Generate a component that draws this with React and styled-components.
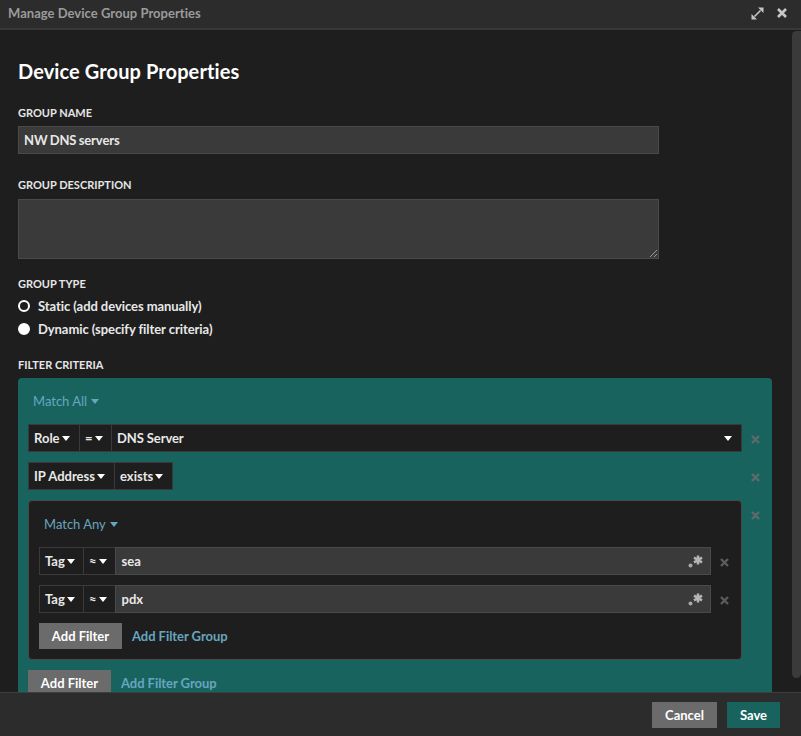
import styled, { createGlobalStyle } from 'styled-components';

const GlobalStyle = createGlobalStyle`
  html, body { margin: 0; padding: 0; height: 100%; background: #1e1e1e; }
  * { box-sizing: border-box; }
  body { font-family: Lato, "Open Sans", sans-serif; color: #fff; overflow: hidden; }
`;

const Modal = styled.div`
  width: 801px;
  height: 736px;
  display: flex;
  flex-direction: column;
`;

const Header = styled.div`
  height: 30px;
  flex: none;
  display: flex;
  align-items: center;
  justify-content: space-between;
  padding: 0 14px 2px 8px;
  background: #2c2c2c;
  border-bottom: 2px solid #383838;
`;

const HeaderTitle = styled.span`
  font-size: 13px;
  font-weight: 700;
  letter-spacing: 0.03px;
  color: #9b9b9b;
`;

const HeaderIcons = styled.div`
  display: flex;
  align-items: center;
  gap: 13px;
`;

const Body = styled.div`
  flex: 1;
  min-height: 0;
  position: relative;
  overflow: hidden;
  padding: 29px 29px 0 18px;
`;

const ScrollThumb = styled.div`
  position: absolute;
  top: 1px;
  right: 0;
  width: 9px;
  height: 647px;
  border-radius: 5px 0 5px 5px;
  background: #3a3a3a;
`;

const Title = styled.h1`
  margin: 0 0 23px;
  font-size: 20px;
  line-height: 24px;
  font-weight: 700;
  letter-spacing: 0.1px;
  color: #fff;
`;

const Label = styled.div`
  font-size: 11px;
  line-height: 14px;
  font-weight: 700;
  color: #e6e6e6;
  margin-bottom: ${(p) => p.$gap || 6}px;
`;

const Field = styled.div`
  width: 641px;
  height: ${(p) => p.$height || 28}px;
  margin-bottom: ${(p) => p.$gap || 24}px;
  padding: 0 5px;
  display: flex;
  align-items: center;
  position: relative;
  font-size: 13px;
  font-weight: 700;
  letter-spacing: -0.1px;
  word-spacing: -0.8px;
  color: #e8e8e8;
  background: #3a3a3a;
  border: 1px solid #4a4a4a;
`;

const Grip = styled.svg`
  position: absolute;
  right: 0;
  bottom: 0;
`;

const RadioRow = styled.div`
  height: 23px;
  display: flex;
  align-items: center;
  gap: 8px;
  font-size: 13px;
  font-weight: 700;
  letter-spacing: -0.06px;
  color: #e8e8e8;
`;

const Radio = styled.span`
  width: 12px;
  height: 12px;
  border-radius: 50%;
  border: 2px solid #fff;
  background: ${(p) => (p.$on ? '#fff' : 'transparent')};
`;

const RadioGroup = styled.div`
  margin: -3px 0 18px;
`;

const FilterPanel = styled.div`
  width: 754px;
  height: 340px;
  padding: 13px 10px 0;
  border-radius: 4px 4px 0 0;
  background: #19635f;
`;

const MatchButton = styled.div`
  height: 20px;
  margin-bottom: 13px;
  padding-left: 5px;
  display: flex;
  align-items: center;
  gap: 4px;
  font-size: 13px;
  color: #66a6bf;
`;

const Caret = styled.span`
  width: 0;
  height: 0;
  flex: none;
  border-left: 4.5px solid transparent;
  border-right: 4.5px solid transparent;
  border-top: 5px solid ${(p) => p.$color || '#fff'};
`;

const Row = styled.div`
  display: flex;
  align-items: center;
  justify-content: space-between;
  margin: 0 -7px 10px 0;
`;

const RowControls = styled.div`
  width: ${(p) => p.$width}px;
  height: 28px;
  flex: none;
  display: flex;
  border: 1px solid #3a3a3a;
  background: #1e1e1e;
`;

const Segment = styled.div`
  display: flex;
  align-items: center;
  gap: 2px;
  flex: none;
  width: ${(p) => p.$width}px;
  padding-left: 5px;
  font-size: 13px;
  font-weight: 700;
  color: #e8e8e8;
  border-right: 1px solid #3a3a3a;
  &:last-child { border-right: none; }
`;

const SelectValue = styled.div`
  flex: 1;
  display: flex;
  align-items: center;
  justify-content: space-between;
  padding: 0 9px 0 5px;
  font-size: 13px;
  font-weight: 700;
  letter-spacing: -0.1px;
  color: #e8e8e8;
`;

const TextValue = styled.div`
  flex: 1;
  display: flex;
  align-items: center;
  justify-content: space-between;
  padding: 0 6px 0 5.5px;
  font-size: 13px;
  font-weight: 700;
  color: #e8e8e8;
  background: #3a3a3a;
  border: 1px solid #4a4a4a;
  margin: -1px;
`;

const RemoveSlot = styled.div`
  width: 27px;
  flex: none;
  display: flex;
  justify-content: center;
  align-items: center;
  align-self: ${(p) => (p.$top ? 'flex-start' : 'center')};
  margin-top: ${(p) => (p.$top ? 11 : 2)}px;
`;

const GroupBox = styled.div`
  width: 714px;
  height: 160px;
  flex: none;
  padding: 13px 10px 0;
  background: #1e1e1e;
  border: 1px solid #4a4a4a;
  border-radius: 4px;
`;

const Actions = styled.div`
  display: flex;
  align-items: center;
  gap: 10px;
`;

const Button = styled.div`
  height: 26px;
  width: ${(p) => p.$width}px;
  display: flex;
  align-items: center;
  justify-content: center;
  font-size: 13px;
  font-weight: 700;
  color: #fff;
  background: ${(p) => p.$bg || '#6b6b6b'};
`;

const LinkText = styled.span`
  font-size: 13px;
  font-weight: 700;
  letter-spacing: -0.05px;
  color: #66a6bf;
`;

const Footer = styled.div`
  height: 44px;
  flex: none;
  display: flex;
  align-items: center;
  justify-content: flex-end;
  gap: 10px;
  padding: 0 21px 0 0;
  background: #2c2c2c;
  border-top: 1px solid #3e3e3e;
`;

const RemoveIcon = ({ color = '#5f6a6a' }) => (
  <svg width="9" height="9" viewBox="0 0 9 9">
    <path d="M1 1l7 7M8 1l-7 7" stroke={color} strokeWidth="2.4" />
  </svg>
);

const RegexIcon = () => (
  <svg width="16" height="14" viewBox="0 0 16 14">
    <circle cx="2.5" cy="11.5" r="2" fill="#a8a8a8" />
    <path d="M10 1.5v9M6 3.6l8 4.8M14 3.6l-8 4.8" stroke="#b5b5b5" strokeWidth="2.5" />
  </svg>
);

const RuleRow = ({ value }) => (
  <Row>
    <RowControls $width={672}>
      <Segment $width={44}>Tag<Caret /></Segment>
      <Segment $width={32}>≈<Caret /></Segment>
      <TextValue>{value}<RegexIcon /></TextValue>
    </RowControls>
    <RemoveSlot><RemoveIcon color="#5c5c5c" /></RemoveSlot>
  </Row>
);

export default function App() {
  return (
    <Modal>
      <GlobalStyle />
      <Header>
        <HeaderTitle>Manage Device Group Properties</HeaderTitle>
        <HeaderIcons>
          <svg width="13" height="13" viewBox="0 0 13 13">
            <path d="M3.5 9.5l6-6" stroke="#c4c4c4" strokeWidth="1.6" />
            <path d="M0.5 12.5v-5.5l5.5 5.5zM12.5 0.5v5.5l-5.5-5.5z" fill="#c4c4c4" />
          </svg>
          <svg width="10" height="10" viewBox="0 0 10 10">
            <path d="M1 1l8 8M9 1l-8 8" stroke="#c8c8c8" strokeWidth="2.6" />
          </svg>
        </HeaderIcons>
      </Header>
      <Body>
        <ScrollThumb />
        <Title>Device Group Properties</Title>
        <Label>GROUP NAME</Label>
        <Field>NW DNS servers</Field>
        <Label $gap={7}>GROUP DESCRIPTION</Label>
        <Field $height={60} $gap={18}>
          <Grip width="9" height="9" viewBox="0 0 9 9">
            <path d="M1 8l7-7M5 8l3-3" stroke="#999" strokeWidth="1" />
          </Grip>
        </Field>
        <Label>GROUP TYPE</Label>
        <RadioGroup>
          <RadioRow><Radio />Static (add devices manually)</RadioRow>
          <RadioRow><Radio $on />Dynamic (specify filter criteria)</RadioRow>
        </RadioGroup>
        <Label>FILTER CRITERIA</Label>
        <FilterPanel>
          <MatchButton>Match All<Caret $color="#66a6bf" /></MatchButton>
          <Row>
            <RowControls $width={714}>
              <Segment $width={51}>Role<Caret /></Segment>
              <Segment $width={32}>=<Caret /></Segment>
              <SelectValue>DNS Server<Caret /></SelectValue>
            </RowControls>
            <RemoveSlot><RemoveIcon /></RemoveSlot>
          </Row>
          <Row>
            <RowControls $width={145}>
              <Segment $width={86}>IP Address<Caret /></Segment>
              <Segment $width={58}>exists<Caret /></Segment>
            </RowControls>
            <RemoveSlot><RemoveIcon /></RemoveSlot>
          </Row>
          <Row>
            <GroupBox>
              <MatchButton>Match Any<Caret $color="#66a6bf" /></MatchButton>
              <RuleRow value="sea" />
              <RuleRow value="pdx" />
              <Actions>
                <Button $width={83}>Add Filter</Button>
                <LinkText>Add Filter Group</LinkText>
              </Actions>
            </GroupBox>
            <RemoveSlot $top><RemoveIcon /></RemoveSlot>
          </Row>
          <Actions>
            <Button $width={83}>Add Filter</Button>
            <LinkText>Add Filter Group</LinkText>
          </Actions>
        </FilterPanel>
      </Body>
      <Footer>
        <Button $width={65}>Cancel</Button>
        <Button $width={53} $bg="#19635f">Save</Button>
      </Footer>
    </Modal>
  );
}
